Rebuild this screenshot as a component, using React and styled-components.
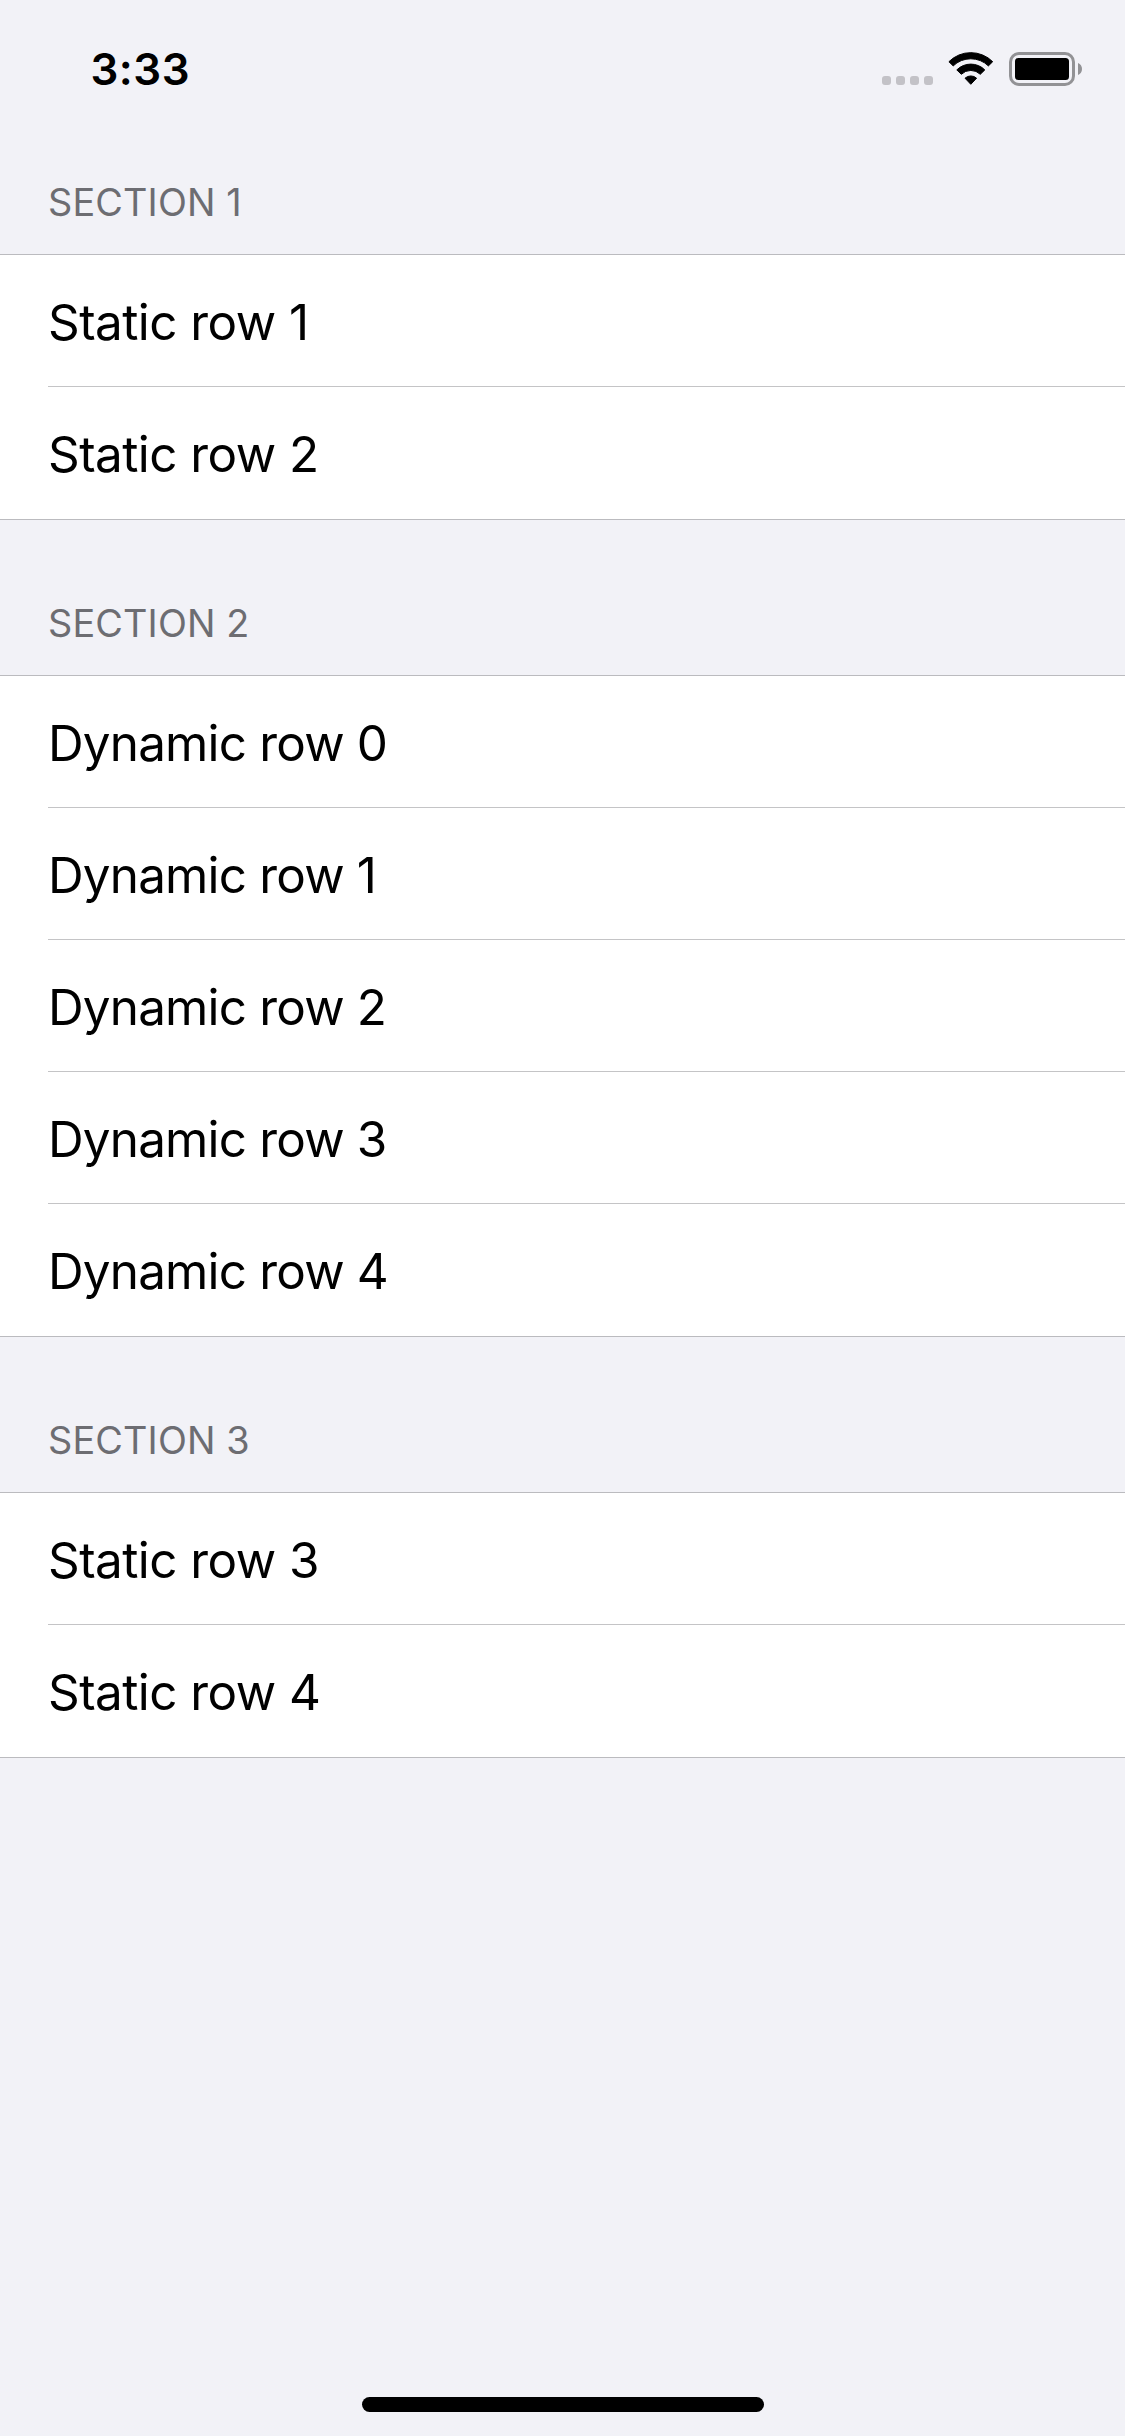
import React from "react";
import styled, { createGlobalStyle } from "styled-components";

const GlobalStyle = createGlobalStyle`
  * { box-sizing: border-box; }
  body {
    margin: 0;
    background: #f2f2f7;
    font-family: Inter, "Liberation Sans", sans-serif;
    color: #000;
  }
`;

const Screen = styled.div`
  display: flex;
  flex-direction: column;
  width: 1125px;
  height: 2436px;
  background: #f2f2f7;
`;

const StatusBar = styled.header`
  display: flex;
  justify-content: space-between;
  height: 132px;
  padding: 43px 43px 0 90.5px;
`;

const Time = styled.time`
  font-size: 43.8px;
  font-weight: 600;
  line-height: 53px;
  letter-spacing: 0.5px;
`;

const Indicators = styled.div`
  display: flex;
  align-items: flex-start;
  padding-top: 9px;
`;

const CellularDots = styled.div`
  display: flex;
  gap: 5px;
  margin: 24px 15px 0 0;
`;

const Dot = styled.span`
  width: 9px;
  height: 9px;
  border-radius: 3px;
  background: #c3c2c7;
`;

const WifiIcon = styled.svg`
  display: block;
  width: 46px;
  height: 34px;
  margin-right: 15px;
`;

const BatteryIcon = styled.svg`
  display: block;
  width: 73px;
  height: 34px;
`;

const SectionHeader = styled.h2`
  display: flex;
  align-items: flex-end;
  height: ${(p) => (p.$first ? 122 : 155)}px;
  margin: 0;
  padding: 0 48px 28px;
  font-size: 37.8px;
  font-weight: 400;
  line-height: 48px;
  letter-spacing: 0.15px;
  color: #6d6d72;
  text-transform: uppercase;
`;

const Group = styled.ul`
  margin: 0;
  padding: 0 0 0 48px;
  list-style: none;
  background: #fff;
  border-top: 1px solid #bbbbbf;
  border-bottom: 1px solid #bbbbbf;
`;

const Row = styled.li`
  height: 132px;
  padding-top: 3px;
  font-size: 49.4px;
  line-height: 128px;
  letter-spacing: ${(p) => p.$tracking}px;
  border-bottom: 1px solid #c4c4c6;

  &:last-child {
    border-bottom: none;
  }
`;

const HomeArea = styled.footer`
  display: flex;
  justify-content: center;
  margin-top: auto;
  padding: 0 0 24px 1px;
`;

const HomeBar = styled.div`
  width: 402px;
  height: 15px;
  border-radius: 8px;
  background: #000;
`;

const sections = [
  {
    title: "Section 1",
    tracking: -0.54,
    rows: ["Static row 1", "Static row 2"],
  },
  {
    title: "Section 2",
    tracking: -0.8,
    rows: [0, 1, 2, 3, 4].map((n) => `Dynamic row ${n}`),
  },
  {
    title: "Section 3",
    tracking: -0.54,
    rows: ["Static row 3", "Static row 4"],
  },
];

function Wifi() {
  return (
    <WifiIcon viewBox="0 0 46 34" aria-label="Wi-Fi">
      <g stroke="#000" strokeWidth="1" strokeLinejoin="round">
        <path d="M0.9 9.7A31 31 0 0 1 44.7 9.7L40.4 13.9A25.3 25.3 0 0 0 5.2 13.9Z" />
        <path d="M8.8 17.9A19.8 19.8 0 0 1 36.8 17.9L32.3 22.3A13.6 13.6 0 0 0 13.3 22.3Z" />
        <path d="M17 26.2A8.6 8.6 0 0 1 28.6 26.2L22.8 32.3Z" />
      </g>
    </WifiIcon>
  );
}

function Battery() {
  return (
    <BatteryIcon viewBox="0 0 73 34" aria-label="Battery full">
      <rect x="1.5" y="1.5" width="63" height="31" rx="8.5" fill="none" stroke="#929295" strokeWidth="3" />
      <rect x="6" y="6" width="54" height="22" rx="3.5" fill="#000" />
      <path d="M69 11C71.5 12 73 14.3 73 17S71.5 22 69 23Z" fill="#929295" />
    </BatteryIcon>
  );
}

export default function App() {
  return (
    <>
      <GlobalStyle />
      <Screen>
        <StatusBar>
          <Time>3:33</Time>
          <Indicators>
            <CellularDots>
              <Dot />
              <Dot />
              <Dot />
              <Dot />
            </CellularDots>
            <Wifi />
            <Battery />
          </Indicators>
        </StatusBar>
        <main>
          {sections.map((section, i) => (
            <section key={section.title}>
              <SectionHeader $first={i === 0}>{section.title}</SectionHeader>
              <Group>
                {section.rows.map((label) => (
                  <Row key={label} $tracking={section.tracking}>
                    {label}
                  </Row>
                ))}
              </Group>
            </section>
          ))}
        </main>
        <HomeArea>
          <HomeBar />
        </HomeArea>
      </Screen>
    </>
  );
}
